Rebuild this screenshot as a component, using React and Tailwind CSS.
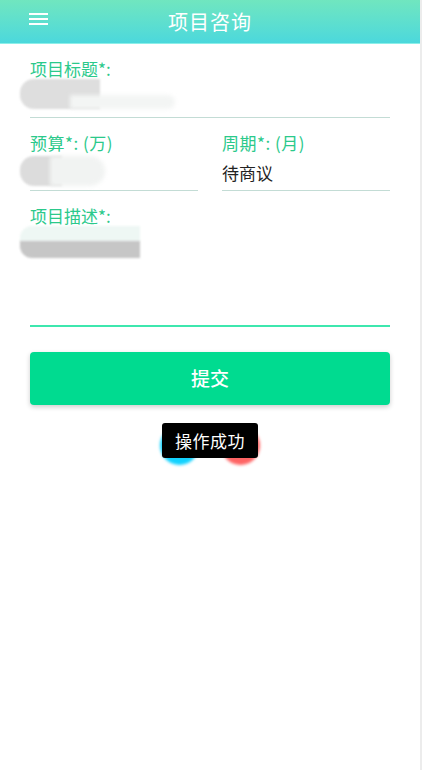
import React from 'react';

const font = { fontFamily: '"Noto Sans CJK SC", "Noto Sans", sans-serif' };

const Blur = ({ className }) => (
  <div className={`absolute rounded-full blur-[1.5px] ${className}`} />
);

export default function App() {
  return (
    <div className="flex w-[422px] h-[770px] bg-white" style={font}>
      <div className="flex-1 flex flex-col">
        {/* header */}
        <div className="relative h-[44px] flex items-center justify-center bg-gradient-to-b from-[#70e6bf] to-[#4bd8dc] border-b border-[#8cefe9]">
          <div className="absolute left-[29px] top-[13px] flex flex-col gap-[3px]">
            <span className="block w-[19px] h-[2px] bg-white" />
            <span className="block w-[19px] h-[2px] bg-white" />
            <span className="block w-[19px] h-[2px] bg-white" />
          </div>
          <h1 className="text-white text-[20px] leading-none tracking-[1px]">项目咨询</h1>
        </div>

        <div className="px-[30px] flex flex-col">
          {/* title */}
          <label className="mt-[13px] text-[17px] leading-[24px] text-[#2bc98b]">项目标题*:</label>
          <div className="relative h-[37px] border-b border-[#c3dcd5]">
            <div className="absolute -left-[10px] top-[-2px] w-[80px] h-[30px] rounded-l-[14px] bg-[#dedede] blur-[1px]" />
            <div className="absolute left-[40px] top-[14px] w-[105px] h-[14px] rounded-r-full bg-[#f3f5f4] blur-[2px]" />
          </div>

          {/* budget / period */}
          <div className="flex gap-[24px] mt-[13px]">
            <div className="flex-1 flex flex-col">
              <label className="text-[17px] leading-[24px] text-[#2bc98b] tracking-[0.5px]">预算*: (万)</label>
              <div className="relative h-[36px] border-b border-[#c3dcd5]">
                <div className="absolute -left-[10px] top-[1px] w-[42px] h-[30px] rounded-l-[14px] bg-[#dcdcdc] blur-[1px]" />
                <div className="absolute left-[20px] top-[1px] w-[55px] h-[30px] rounded-r-full bg-[#f1f3f2] blur-[2px]" />
              </div>
            </div>
            <div className="flex-1 flex flex-col">
              <label className="text-[17px] leading-[24px] text-[#2bc98b] tracking-[0.5px]">周期*: (月)</label>
              <div className="h-[36px] border-b border-[#c3dcd5] flex items-center pt-[1px] text-[17px] text-[#222]">
                待商议
              </div>
            </div>
          </div>

          {/* description */}
          <label className="mt-[13px] text-[17px] leading-[24px] text-[#2bc98b]">项目描述*:</label>
          <div className="relative h-[99px] border-b-2 border-[#3de7ae]">
            <div className="absolute -left-[10px] top-[-2px] w-[120px] h-[16px] rounded-tl-[12px] bg-[#eef7f4] blur-[1px]" />
            <div className="absolute -left-[10px] top-[13px] w-[120px] h-[17px] rounded-bl-[12px] bg-[#c6c6c6] blur-[1px]" />
          </div>

          {/* submit */}
          <button className="mt-[25px] h-[53px] rounded-[4px] bg-[#00db90] text-white text-[19px] font-medium shadow-[0_2px_5px_rgba(0,0,0,0.2)]">
            提交
          </button>

          {/* toast */}
          <div className="relative mt-[18px] h-[42px] flex justify-center">
            <Blur className="left-[130px] top-[3px] w-[39px] h-[39px] bg-[#12d2ff]" />
            <Blur className="left-[191px] top-[3px] w-[39px] h-[39px] bg-[#ff6464]" />
            <div className="relative h-[35px] px-[13px] flex items-center rounded-[3px] bg-black text-white text-[17px] tracking-[0.5px]">
              操作成功
            </div>
          </div>
        </div>
      </div>
      <div className="w-[2px] h-full bg-[#ececec]" />
    </div>
  );
}
